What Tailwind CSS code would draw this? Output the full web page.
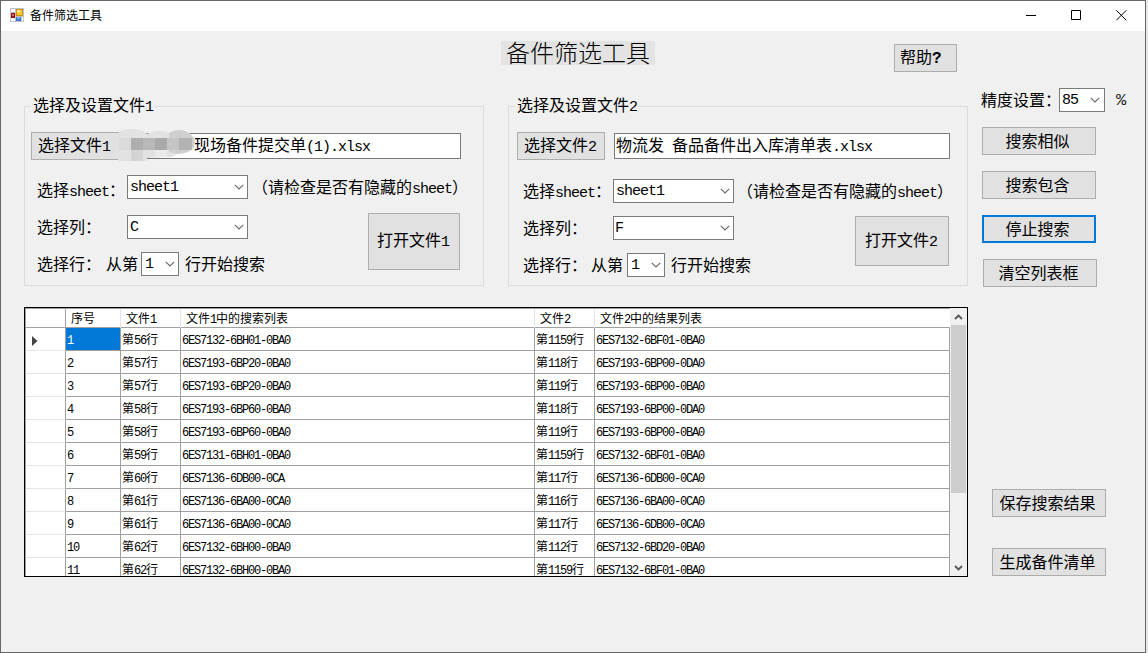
<!DOCTYPE html>
<html lang="zh-CN">
<head>
  <meta charset="UTF-8" />
  <meta name="viewport" content="width=device-width, initial-scale=1" />
  <title>备件筛选工具</title>
  <script src="https://cdn.jsdelivr.net/npm/@tailwindcss/browser@4"></script>
</head>

<body class="w-[1148px] h-[653px] overflow-hidden bg-[#e8e8e8] text-black font-['Noto_Sans_CJK_SC',sans-serif]">

  <div class="w-[1146px] h-[653px] border border-[#666] bg-[#f0f0f0] flex flex-col text-[16px] leading-none whitespace-nowrap">

    <!-- Title bar -->
    <header class="h-[30px] shrink-0 bg-white flex items-center pl-[9px] pr-[18px] pb-[2px]">
      <svg class="w-[14px] h-[14px]" viewBox="0 0 14 14" shape-rendering="crispEdges">
        <rect width="14" height="14" fill="#c4c4c4" />
        <rect x="1" y="1" width="4" height="3" fill="#fff" />
        <rect x="1" y="10" width="4" height="3" fill="#fff" />
        <rect x="6" y="1" width="7" height="7" fill="#c8920f" />
        <rect x="7" y="2" width="5" height="5" fill="#ffc933" />
        <rect x="7" y="2" width="3" height="2" fill="#ffe9a0" />
        <rect x="1" y="5" width="4" height="5" fill="#9c1010" />
        <rect x="2" y="6" width="2" height="2" fill="#e06a5a" />
        <rect x="6" y="9" width="5" height="4" fill="#3a78d8" />
        <rect x="7" y="9" width="3" height="2" fill="#7fb0f5" />
        <rect x="12" y="9" width="1" height="4" fill="#fff" />
      </svg>
      <span class="ml-[6px] text-[12px]">备件筛选工具</span>
      <div class="ml-auto flex items-center gap-[34px]">
        <svg class="w-[11px] h-[11px]" viewBox="0 0 11 11"><path d="M0 5.5H10" stroke="#000" /></svg>
        <svg class="w-[11px] h-[11px]" viewBox="0 0 11 11"><path d="M.5 .5H9.5V9.5H.5Z" stroke="#000" fill="none" /></svg>
        <svg class="w-[11px] h-[11px]" viewBox="0 0 11 11"><path d="M.3 .3L10.3 10.3M10.3 .3L.3 10.3" stroke="#000" fill="none" /></svg>
      </div>
    </header>

    <main class="flex-1 flex pl-[23px]">

      <!-- Left side -->
      <div class="w-[944px]">
        <div class="h-[75px] flex items-start">
          <h1 class="ml-[477px] mt-[10px] w-[154px] h-[24px] bg-[#e3e3e3] pl-[5px] text-[24px] leading-[22px] font-light">备件筛选工具</h1>
          <button class="ml-[239px] mt-[13px] w-[63px] h-[28px] border border-[#adadad] bg-[#e1e1e1] pl-[5px] pb-[1px] text-left">帮助<span class="font-['Liberation_Mono',monospace] text-[16px] font-bold">?</span></button>
        </div>

        <div class="flex gap-[24px]">
          <!-- File 1 -->
          <section class="relative w-[460px] h-[180px] border border-[#dcdcdc] pl-[6px]">
            <h2 class="absolute left-[6px] -top-[12px] bg-[#f0f0f0] pl-[2px] pr-[2px] leading-[18px]">选择及设置文件<span class="font-['Liberation_Mono',monospace] text-[15px] tracking-[-1px]">1</span></h2>
            <div class="mt-[25px] h-[28px] flex items-center relative">
              <button class="w-[90px] h-[28px] border border-[#adadad] bg-[#e1e1e1] pl-[6px] pb-[1px] text-left">选择文件<span class="font-['Liberation_Mono',monospace] text-[15px] tracking-[-1px]">1</span></button>
              <div class="w-[340px] h-[26px] border border-[#7a7a7a] bg-white pl-[72px] leading-[20px]">现场备件提交单<span class="font-['Liberation_Mono',monospace] text-[15px] tracking-[-1px]">(1).xlsx</span></div>
              <!-- blurred out part of the file name -->
              <svg class="absolute left-[86px] -top-[4px] w-[80px] h-[34px]" viewBox="0 0 80 34">
                <path d="M2 4Q12 -2 26 3L30 6Q42 0 53 5Q62 -1 72 5Q80 11 77 19Q72 26 60 26L55 29L30 30V33H1Z" fill="#e2e2e2" />
                <path d="M52 5Q62 -1 72 5Q80 11 77 19Q72 26 60 26L52 24Z" fill="#cfcfcf" />
                <g shape-rendering="crispEdges">
                  <rect x="2" y="10" width="12" height="12" fill="#dadada" />
                  <rect x="14" y="10" width="12" height="12" fill="#aeaeae" />
                  <rect x="26" y="10" width="12" height="12" fill="#b8b8b8" />
                  <rect x="38" y="10" width="12" height="12" fill="#a9a9a9" />
                  <rect x="50" y="10" width="12" height="12" fill="#c5c5c5" />
                  <rect x="62" y="10" width="13" height="12" fill="#b3b3b3" />
                  <rect x="14" y="22" width="12" height="11" fill="#d4d4d4" />
                  <rect x="38" y="22" width="12" height="7" fill="#ebebeb" />
                </g>
              </svg>
            </div>
            <div class="mt-[15px] h-[24px] flex items-center">
              <span class="ml-[6px] w-[90px] pt-[6px]">选择<span class="font-['Liberation_Mono',monospace] text-[15px] tracking-[-1px]">sheet</span>：</span>
              <div class="w-[121px] h-[24px] border border-[#7a7a7a] bg-white flex items-center justify-between pl-[2px] pr-[3px]">
                <span class="font-['Liberation_Mono',monospace] text-[15px] tracking-[-1px]">sheet1</span>
                <svg class="w-[10px] h-[6px]" viewBox="0 0 10 6"><path d="M.8 .8L5 5L9.2 .8" stroke="#666" stroke-width="1.1" fill="none" /></svg>
              </div>
              <span class="ml-[4px]">（请检查是否有隐藏的<span class="font-['Liberation_Mono',monospace] text-[15px] tracking-[-1px]">sheet</span>）</span>
            </div>
            <div class="mt-[14px] flex items-start">
              <div class="w-[337px] pt-[2px] flex flex-col gap-[13px]">
                <div class="h-[24px] flex items-center">
                  <span class="ml-[6px] w-[90px] pb-[2px]">选择列：</span>
                  <div class="w-[121px] h-[24px] border border-[#7a7a7a] bg-white flex items-center justify-between pl-[2px] pr-[3px]">
                    <span class="font-['Liberation_Mono',monospace] text-[15px] tracking-[-1px]">C</span>
                    <svg class="w-[10px] h-[6px]" viewBox="0 0 10 6"><path d="M.8 .8L5 5L9.2 .8" stroke="#666" stroke-width="1.1" fill="none" /></svg>
                  </div>
                </div>
                <div class="h-[24px] flex items-center">
                  <span class="ml-[6px] w-[69px] pb-[2px]">选择行：</span>
                  <span class="w-[35px] pb-[2px]">从第</span>
                  <div class="w-[38px] h-[24px] border border-[#7a7a7a] bg-white flex items-center justify-between pl-[3px] pr-[3px]">
                    <span class="font-['Liberation_Mono',monospace] text-[15px] tracking-[-1px]">1</span>
                    <svg class="w-[10px] h-[6px]" viewBox="0 0 10 6"><path d="M.8 .8L5 5L9.2 .8" stroke="#666" stroke-width="1.1" fill="none" /></svg>
                  </div>
                  <span class="ml-[6px] pb-[2px]">行开始搜索</span>
                </div>
              </div>
              <button class="w-[92px] h-[57px] border border-[#adadad] bg-[#e1e1e1] pl-[8px] pb-[2px] text-left">打开文件<span class="font-['Liberation_Mono',monospace] text-[15px] tracking-[-1px]">1</span></button>
            </div>
          </section>

          <!-- File 2 -->
          <section class="relative w-[460px] h-[180px] border border-[#dcdcdc] pl-[8px]">
            <h2 class="absolute left-[6px] -top-[12px] bg-[#f0f0f0] pl-[2px] pr-[2px] leading-[18px]">选择及设置文件<span class="font-['Liberation_Mono',monospace] text-[15px] tracking-[-1px]">2</span></h2>
            <div class="mt-[25px] h-[28px] flex items-center">
              <button class="w-[88px] h-[28px] border border-[#adadad] bg-[#e1e1e1] pl-[6px] pb-[1px] text-left">选择文件<span class="font-['Liberation_Mono',monospace] text-[15px] tracking-[-1px]">2</span></button>
              <div class="ml-[9px] w-[336px] h-[26px] border border-[#7a7a7a] bg-white pl-[1px] leading-[20px]">物流发<span class="font-['Liberation_Mono',monospace] text-[15px] tracking-[-1px]">&nbsp;</span>备品备件出入库清单表<span class="font-['Liberation_Mono',monospace] text-[15px] tracking-[-1px]">.xlsx</span></div>
            </div>
            <div class="mt-[19px] h-[24px] flex items-center">
              <span class="ml-[6px] w-[90px]">选择<span class="font-['Liberation_Mono',monospace] text-[15px] tracking-[-1px]">sheet</span>：</span>
              <div class="w-[121px] h-[24px] border border-[#7a7a7a] bg-white flex items-center justify-between pl-[2px] pr-[3px]">
                <span class="font-['Liberation_Mono',monospace] text-[15px] tracking-[-1px]">sheet1</span>
                <svg class="w-[10px] h-[6px]" viewBox="0 0 10 6"><path d="M.8 .8L5 5L9.2 .8" stroke="#666" stroke-width="1.1" fill="none" /></svg>
              </div>
              <span class="ml-[3px]">（请检查是否有隐藏的<span class="font-['Liberation_Mono',monospace] text-[15px] tracking-[-1px]">sheet</span>）</span>
            </div>
            <div class="mt-[13px] flex items-start">
              <div class="w-[338px] flex flex-col gap-[13px]">
                <div class="h-[24px] flex items-center">
                  <span class="ml-[6px] w-[90px] pb-[2px]">选择列：</span>
                  <div class="w-[121px] h-[24px] border border-[#7a7a7a] bg-white flex items-center justify-between pl-[1px] pr-[3px]">
                    <span class="font-['Liberation_Mono',monospace] text-[15px] tracking-[-1px]">F</span>
                    <svg class="w-[10px] h-[6px]" viewBox="0 0 10 6"><path d="M.8 .8L5 5L9.2 .8" stroke="#666" stroke-width="1.1" fill="none" /></svg>
                  </div>
                </div>
                <div class="h-[24px] flex items-center">
                  <span class="ml-[6px] w-[68px] pb-[2px]">选择行：</span>
                  <span class="w-[36px] pb-[2px]">从第</span>
                  <div class="w-[38px] h-[24px] border border-[#7a7a7a] bg-white flex items-center justify-between pl-[3px] pr-[3px]">
                    <span class="font-['Liberation_Mono',monospace] text-[15px] tracking-[-1px]">1</span>
                    <svg class="w-[10px] h-[6px]" viewBox="0 0 10 6"><path d="M.8 .8L5 5L9.2 .8" stroke="#666" stroke-width="1.1" fill="none" /></svg>
                  </div>
                  <span class="ml-[6px] pb-[2px]">行开始搜索</span>
                </div>
              </div>
              <button class="w-[94px] h-[50px] border border-[#adadad] bg-[#e1e1e1] pl-[9px] pb-[1px] text-left">打开文件<span class="font-['Liberation_Mono',monospace] text-[15px] tracking-[-1px]">2</span></button>
            </div>
          </section>
        </div>

        <!-- Results -->
        <div class="mt-[21px] w-[944px] h-[270px] border border-black bg-white flex overflow-hidden">
          <div class="w-[925px] h-[268px] overflow-hidden border-l border-t border-[#a0a0a0] text-[12px]">
            <div class="h-[19px] grid grid-rows-[19px] grid-cols-[40px_55px_60px_354px_60px_355px] border-b border-[#a0a0a0] leading-[17px]">
              <span class="border-r border-[#a0a0a0]"></span>
              <span class="border-r border-[#e5e5e5] pl-[5px]">序号</span>
              <span class="border-r border-[#e5e5e5] pl-[5px]">文件<span class="font-['Liberation_Mono',monospace] text-[12px] tracking-[-1.2px]">1</span></span>
              <span class="border-r border-[#e5e5e5] pl-[5px]">文件<span class="font-['Liberation_Mono',monospace] text-[12px] tracking-[-1.2px]">1</span>中的搜索列表</span>
              <span class="border-r border-[#e5e5e5] pl-[5px]">文件<span class="font-['Liberation_Mono',monospace] text-[12px] tracking-[-1.2px]">2</span></span>
              <span class="pl-[5px]">文件<span class="font-['Liberation_Mono',monospace] text-[12px] tracking-[-1.2px]">2</span>中的结果列表</span>
            </div>
            <div id="rows"></div>
          </div>
          <div class="w-[17px] h-[268px] bg-[#f0f0f0] flex flex-col items-center">
            <svg class="w-[9px] h-[6px] mt-[6px]" viewBox="0 0 9 6"><path d="M1 5L4.5 1.5L8 5" stroke="#555" stroke-width="1.8" fill="none" /></svg>
            <div class="mt-[5px] w-[15px] h-[168px] bg-[#cdcdcd]"></div>
            <svg class="w-[9px] h-[6px] mt-auto mb-[5px]" viewBox="0 0 9 6"><path d="M1 1L4.5 4.5L8 1" stroke="#555" stroke-width="1.8" fill="none" /></svg>
          </div>
        </div>
      </div>

      <!-- Right side -->
      <aside class="pl-[14px] pt-[57px] flex flex-col items-start">
        <div class="h-[24px] flex items-center -ml-px">
          <span class="w-[78px] pb-[2px]">精度设置：</span>
          <div class="w-[46px] h-[24px] border border-[#7a7a7a] bg-white flex items-center justify-between pl-[2px] pr-[4px]">
            <span class="font-['Liberation_Mono',monospace] text-[15px] tracking-[-1px]">85</span>
            <svg class="w-[10px] h-[6px]" viewBox="0 0 10 6"><path d="M.8 .8L5 5L9.2 .8" stroke="#666" stroke-width="1.1" fill="none" /></svg>
          </div>
          <span class="ml-[11px] font-['Liberation_Mono',monospace] text-[17px] text-[#222]">%</span>
        </div>
        <button class="mt-[15px] w-[114px] h-[28px] border border-[#adadad] bg-[#e1e1e1] pr-[3px] pb-[2px]">搜索相似</button>
        <button class="mt-[16px] w-[114px] h-[28px] border border-[#adadad] bg-[#e1e1e1] pr-[3px] pb-[2px]">搜索包含</button>
        <button class="mt-[16px] w-[114px] h-[28px] border-2 border-[#0078d7] bg-[#e1e1e1] pr-[3px] pb-[2px]">停止搜索</button>
        <button class="ml-px mt-[16px] w-[114px] h-[28px] border border-[#adadad] bg-[#e1e1e1] pr-[3px] pb-[2px]">清空列表框</button>
        <button class="ml-[10px] mt-[202px] w-[114px] h-[28px] border border-[#adadad] bg-[#e1e1e1] pr-[3px] pb-[2px]">保存搜索结果</button>
        <button class="ml-[10px] mt-[31px] w-[114px] h-[28px] border border-[#adadad] bg-[#e1e1e1] pr-[3px] pb-[2px]">生成备件清单</button>
      </aside>
    </main>
  </div>

  <script>
    const data = [
      [56, '6ES7132-6BH01-0BA0', 1159, '6ES7132-6BF01-0BA0'],
      [57, '6ES7193-6BP20-0BA0', 118, '6ES7193-6BP00-0DA0'],
      [57, '6ES7193-6BP20-0BA0', 119, '6ES7193-6BP00-0BA0'],
      [58, '6ES7193-6BP60-0BA0', 118, '6ES7193-6BP00-0DA0'],
      [58, '6ES7193-6BP60-0BA0', 119, '6ES7193-6BP00-0BA0'],
      [59, '6ES7131-6BH01-0BA0', 1159, '6ES7132-6BF01-0BA0'],
      [60, '6ES7136-6DB00-0CA', 117, '6ES7136-6DB00-0CA0'],
      [61, '6ES7136-6BA00-0CA0', 116, '6ES7136-6BA00-0CA0'],
      [61, '6ES7136-6BA00-0CA0', 117, '6ES7136-6DB00-0CA0'],
      [62, '6ES7132-6BH00-0BA0', 112, '6ES7132-6BD20-0BA0'],
      [62, '6ES7132-6BH00-0BA0', 1159, '6ES7132-6BF01-0BA0']
    ];

    const mono = (t) => `<span class="font-['Liberation_Mono',monospace] text-[12px] tracking-[-1.2px]">${t}</span>`;
    const arrow = '<svg class="w-[6px] h-[10px] ml-[6px] mt-[8px]" viewBox="0 0 6 10"><path d="M0 0L5.5 5L0 10Z" fill="#444" /></svg>';
    const cell = 'border-r border-b border-[#a0a0a0] pl-[1px]';

    document.getElementById('rows').innerHTML = data.map((r, i) => `
      <div class="h-[23px] grid grid-rows-[23px] grid-cols-[40px_55px_60px_354px_60px_355px] leading-[21px]">
        <div class="border-r border-r-[#a0a0a0] border-b border-b-[#e5e5e5]">${i === 0 ? arrow : ''}</div>
        <div class="${cell} ${i === 0 ? 'bg-[#0078d7] text-white' : ''}">${mono(i + 1)}</div>
        <div class="${cell}">第${mono(r[0])}行</div>
        <div class="${cell}">${mono(r[1])}</div>
        <div class="${cell}">第${mono(r[2])}行</div>
        <div class="${cell}">${mono(r[3])}</div>
      </div>`).join('');
  </script>

</body>
</html>
